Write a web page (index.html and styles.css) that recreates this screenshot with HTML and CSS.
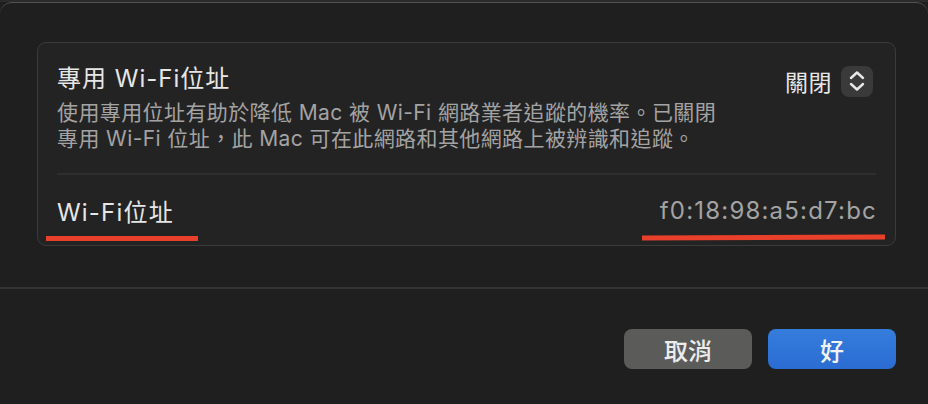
FILE: index.html
```html
<!DOCTYPE html>
<html lang="zh-Hant">

<head>
    <meta charset="UTF-8">
    <meta name="viewport" content="width=device-width, initial-scale=1.0">
    <title>Wi-Fi 位址</title>
    <link rel="stylesheet" href="styles.css">
</head>

<body>
    <div class="top-strip"></div>

    <div class="sheet">
        <!-- Settings Box -->
        <div class="settings-box">
            <div class="private-section">
                <div class="private-text">
                    <h2>專用 Wi-Fi位址</h2>
                    <p>使用專用位址有助於降低 Mac 被 Wi-Fi 網路業者追蹤的機率。已關閉<br>專用 Wi-Fi 位址，此 Mac 可在此網路和其他網路上被辨識和追蹤。</p>
                </div>
                <div class="popup">
                    <span>關閉</span>
                    <span class="stepper">
                        <svg width="20" height="24" viewBox="0 0 20 24">
                            <path d="M4 9 L10 3.5 L16 9" fill="none" stroke="#e8e8e8" stroke-width="2.4" stroke-linecap="round" stroke-linejoin="round" />
                            <path d="M4 15 L10 20.5 L16 15" fill="none" stroke="#e8e8e8" stroke-width="2.4" stroke-linecap="round" stroke-linejoin="round" />
                        </svg>
                    </span>
                </div>
            </div>

            <div class="address-row">
                <span class="address-label">Wi-Fi位址</span>
                <span class="address-value">f0:18:98:a5:d7:bc</span>
                <span class="mark mark-left"></span>
                <span class="mark mark-right"></span>
            </div>
        </div>

        <!-- Footer Buttons -->
        <div class="footer">
            <button class="btn btn-cancel">取消</button>
            <button class="btn btn-ok">好</button>
        </div>
    </div>
</body>

</html>
```

FILE: styles.css
```css
:root {
    --color-bg: #1f1f1f;
    --color-box: #232323;
    --color-border: #3b3b3b;
    --color-text: #e6e6e6;
    --color-muted: #a3a3a3;
    --color-mark: #e8402a;
}

* {
    margin: 0;
    padding: 0;
    box-sizing: border-box;
    font-family: Inter, 'Noto Sans CJK TC', sans-serif;
}

body {
    width: 928px;
    height: 404px;
    overflow: hidden;
    background-color: var(--color-bg);
    color: var(--color-text);
}

.top-strip {
    height: 2px;
    background-color: #2b2b2b;
}

.sheet {
    border-top: 1px solid #525252;
    border-radius: 12px 12px 0 0;
    padding-top: 39px;
}

/* Settings Box */
.settings-box {
    margin: 0 32px 0 37px;
    background-color: var(--color-box);
    border: 1px solid var(--color-border);
    border-radius: 9px;
}

.private-section {
    display: flex;
    justify-content: space-between;
    align-items: flex-start;
    margin: 0 19px;
    padding: 20px 0 21px;
    border-bottom: 2px solid #2e2e2e;
}

.private-text h2 {
    font-size: 24px;
    font-weight: 400;
    line-height: 32px;
    letter-spacing: 1px;
    margin-bottom: 5px;
}

.private-text p {
    font-size: 21px;
    line-height: 26px;
    color: var(--color-muted);
    letter-spacing: 0.4px;
}

.popup {
    display: flex;
    align-items: center;
    gap: 9px;
    font-size: 23px;
    letter-spacing: 0.5px;
    padding-top: 1px;
    margin-right: 3px;
}

.stepper {
    display: flex;
    align-items: center;
    justify-content: center;
    width: 32px;
    height: 31px;
    background-color: #3a3a3a;
    border-radius: 8px;
}

.address-row {
    position: relative;
    display: flex;
    justify-content: space-between;
    align-items: center;
    height: 70px;
    padding: 0 19px;
    font-size: 24px;
}

.address-label {
    letter-spacing: 1.2px;
}

.address-value {
    color: var(--color-muted);
    letter-spacing: 1.2px;
    margin-right: -1px;
}

/* Red annotation marks */
.mark {
    position: absolute;
    height: 5px;
    background-color: var(--color-mark);
}

.mark-left {
    left: 8px;
    top: 61px;
    width: 152px;
}

.mark-right {
    left: 604px;
    top: 60px;
    width: 243px;
    transform: rotate(-0.2deg);
}

/* Footer */
.footer {
    display: flex;
    justify-content: flex-end;
    gap: 16px;
    margin-top: 41px;
    border-top: 2px solid #333;
    padding: 40px 32px 0;
}

.btn {
    width: 128px;
    height: 40px;
    border: none;
    border-radius: 8px;
    font-size: 24px;
    font-weight: 500;
    color: #ececec;
    cursor: pointer;
}

.btn-cancel {
    background-color: #5b5b5a;
}

.btn-ok {
    background: linear-gradient(#357ddd, #2b6cd2);
    color: #f2f2f2;
}
```
